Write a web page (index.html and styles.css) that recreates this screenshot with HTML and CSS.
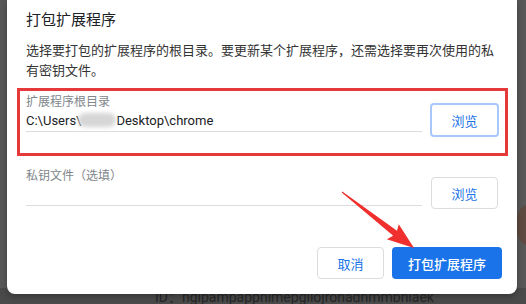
FILE: index.html
```html
<!DOCTYPE html>
<html lang="zh-CN">
<head>
    <meta charset="UTF-8">
    <title>打包扩展程序</title>
    <link rel="stylesheet" href="styles.css">
</head>
<body>
    <div class="screen">
        <!-- page behind the modal -->
        <div class="backdrop-id">ID：nglpampappnimepgliojronadnmmbnlaek</div>
        <div class="backdrop-dot"></div>

        <div class="dialog">
            <h1 class="dialog-title">打包扩展程序</h1>
            <p class="dialog-desc">选择要打包的扩展程序的根目录。要更新某个扩展程序，还需选择要再次使用的私有密钥文件。</p>

            <div class="field">
                <div class="field-main">
                    <div class="field-label">扩展程序根目录</div>
                    <div class="field-input">C:\Users\<span class="blurred"></span>Desktop\chrome</div>
                </div>
                <button class="btn btn-browse focused">浏览</button>
            </div>

            <div class="field field-second">
                <div class="field-main">
                    <div class="field-label">私钥文件（选填）</div>
                    <div class="field-input"></div>
                </div>
                <button class="btn btn-browse">浏览</button>
            </div>

            <div class="actions">
                <button class="btn btn-cancel">取消</button>
                <button class="btn btn-primary">打包扩展程序</button>
            </div>
        </div>

        <!-- screenshot annotations -->
        <div class="mark-box"></div>
        <svg class="mark-arrow" width="526" height="304" viewBox="0 0 526 304">
            <polygon points="341.7,192.4 393.2,235.8 386.8,239.2 414,248 398.8,224.2 397,230.8 342.3,191.6" fill="#f0302e"/>
        </svg>
    </div>
</body>
</html>
```

FILE: styles.css
```css
body {
    margin: 0;
    background-color: #585858;
    font-family: Roboto, "Noto Sans CJK SC", sans-serif;
}
.screen {
    position: relative;
    width: 526px;
    height: 304px;
    overflow: hidden;
}
.backdrop-id {
    position: absolute;
    left: 0;
    right: 0;
    top: 288px;
    height: 16px;
    padding-left: 155px;
    background: #4a4a4a;
    color: #262626;
    font-size: 14px;
    line-height: 18px;
}
.backdrop-dot {
    position: absolute;
    left: 516px;
    top: 205px;
    width: 24px;
    height: 40px;
    border-radius: 50%;
    background: #5e4a40;
}
.dialog {
    position: relative;
    width: 510px;
    margin-left: 7px;
    box-sizing: border-box;
    padding: 10px 18px 15px 19px;
    background: #fff;
    border-radius: 0 0 8px 8px;
    box-shadow: 0 2px 6px rgba(0,0,0,0.3);
}
.dialog-title {
    margin: 0;
    font-size: 15px;
    font-weight: normal;
    line-height: 20px;
    color: #202124;
}
.dialog-desc {
    margin: 11px 0 0;
    font-size: 13px;
    line-height: 20px;
    color: #333;
}
.field {
    display: flex;
    align-items: flex-start;
    margin-top: 13px;
}
.field-second {
    margin-top: 31px;
}
.field-main {
    flex: 1;
}
.field-label {
    font-size: 12px;
    line-height: 16px;
    color: #80868b;
}
.field-input {
    height: 18px;
    padding: 2px 0 1px;
    border-bottom: 1px solid #dadce0;
    font-size: 13px;
    line-height: 18px;
    color: #202124;
}
.blurred {
    display: inline-block;
    width: 38px;
    height: 14px;
    margin-left: -3px;
    vertical-align: -2px;
    background: #d6d6d6;
    border-radius: 7px;
    filter: blur(2px);
}
.btn {
    box-sizing: border-box;
    height: 32px;
    border: 1px solid #dadce0;
    border-radius: 4px;
    background: #fff;
    color: #1a73e8;
    font-family: "Noto Sans CJK SC", sans-serif;
    font-size: 13px;
    padding: 0;
}
.btn-browse {
    width: 67px;
    margin: 9px 1px 0 9px;
}
.btn-browse.focused {
    width: 69px;
    height: 34px;
    margin: 9px 0 0 8px;
    border: 2px solid #a8c7fa;
}
.actions {
    display: flex;
    justify-content: flex-end;
    gap: 8px;
    margin: 38px -3px 0 0;
}
.btn-cancel {
    width: 67px;
}
.btn-primary {
    width: 110px;
    border: none;
    background: #1a73e8;
    color: #fff;
    font-weight: 500;
}
.mark-box {
    position: absolute;
    left: 17px;
    top: 88px;
    width: 491px;
    height: 68px;
    box-sizing: border-box;
    border: 3px solid #e5393b;
}
.mark-arrow {
    position: absolute;
    left: 0;
    top: 0;
}
```
